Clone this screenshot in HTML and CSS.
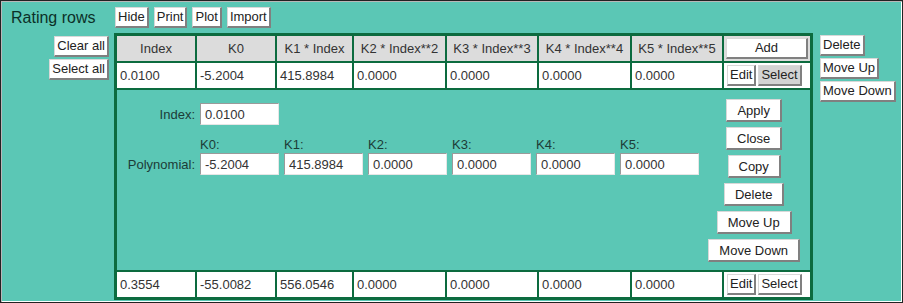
FILE: index.html
```html
<!DOCTYPE html>
<html lang="en">
<head>
    <meta charset="UTF-8">
    <title>Rating rows</title>
    <link rel="stylesheet" href="styles.css">
</head>
<body>
    <div class="frame">
        <div class="titlebar">
            <span class="title">Rating rows</span>
            <div class="tools">
                <button>Hide</button>
                <button>Print</button>
                <button>Plot</button>
                <button>Import</button>
            </div>
        </div>
        <div class="main">
            <div class="side-left">
                <button>Clear all</button>
                <button>Select all</button>
            </div>
            <table class="rows">
                <colgroup>
                    <col style="width: 78px">
                    <col style="width: 78px">
                    <col style="width: 75px">
                    <col style="width: 91px">
                    <col style="width: 90px">
                    <col style="width: 91px">
                    <col style="width: 90px">
                    <col style="width: 86px">
                </colgroup>
                <thead>
                    <tr>
                        <th>Index</th>
                        <th>K0</th>
                        <th>K1 * Index</th>
                        <th>K2 * Index**2</th>
                        <th>K3 * Index**3</th>
                        <th>K4 * Index**4</th>
                        <th>K5 * Index**5</th>
                        <th class="act-head"><button class="add">Add</button></th>
                    </tr>
                </thead>
                <tbody>
                    <tr>
                        <td>0.0100</td>
                        <td>-5.2004</td>
                        <td>415.8984</td>
                        <td>0.0000</td>
                        <td>0.0000</td>
                        <td>0.0000</td>
                        <td>0.0000</td>
                        <td class="act"><div class="act-btns"><button>Edit</button><button class="on">Select</button></div></td>
                    </tr>
                    <tr>
                        <td colspan="8" class="editor-cell">
                            <div class="editor">
                                <div class="fields">
                                    <label class="lbl">Index:</label>
                                    <input type="text" value="0.0100">
                                    <span></span><span></span><span></span><span></span><span></span>

                                    <span></span>
                                    <label class="klbl">K0:</label>
                                    <label class="klbl">K1:</label>
                                    <label class="klbl">K2:</label>
                                    <label class="klbl">K3:</label>
                                    <label class="klbl">K4:</label>
                                    <label class="klbl">K5:</label>

                                    <label class="lbl">Polynomial:</label>
                                    <input type="text" value="-5.2004">
                                    <input type="text" value="415.8984">
                                    <input type="text" value="0.0000">
                                    <input type="text" value="0.0000">
                                    <input type="text" value="0.0000">
                                    <input type="text" value="0.0000">
                                </div>
                                <div class="ed-btns">
                                    <button>Apply</button>
                                    <button>Close</button>
                                    <button>Copy</button>
                                    <button>Delete</button>
                                    <button>Move Up</button>
                                    <button>Move Down</button>
                                </div>
                            </div>
                        </td>
                    </tr>
                    <tr>
                        <td>0.3554</td>
                        <td>-55.0082</td>
                        <td>556.0546</td>
                        <td>0.0000</td>
                        <td>0.0000</td>
                        <td>0.0000</td>
                        <td>0.0000</td>
                        <td class="act"><div class="act-btns"><button>Edit</button><button>Select</button></div></td>
                    </tr>
                </tbody>
            </table>
            <div class="side-right">
                <button>Delete</button>
                <button>Move Up</button>
                <button>Move Down</button>
            </div>
        </div>
    </div>
</body>
</html>
```

FILE: styles.css
```css
body {
    margin: 0;
    font-family: "Liberation Sans", Arial, sans-serif;
    font-size: 13px;
    color: #333;
}
.frame {
    width: 903px;
    height: 303px;
    box-sizing: border-box;
    border: 1px solid #222;
    box-shadow: inset 1px 1px #b8b8b8, inset -1px -1px #fff;
    background-color: #5bc7b5;
    overflow: hidden;
}
button {
    font-family: "Liberation Sans", Arial, sans-serif;
    font-size: 13px;
    line-height: 15px;
    color: #222;
    background-color: #fff;
    border-style: solid;
    border-width: 1px 2px 2px 1px;
    border-color: #d8d8d8 #808080 #808080 #d8d8d8;
    border-radius: 0;
    padding: 1px 2px 2px;
    margin: 0;
}
button.on {
    background-color: #d3d3d3;
}
.titlebar {
    display: flex;
    align-items: center;
    padding-top: 6px;
}
.title {
    width: 114px;
    box-sizing: border-box;
    padding-left: 10px;
    font-size: 16px;
    color: #0c3028;
}
.tools {
    display: flex;
    gap: 5px;
}
.main {
    display: flex;
    align-items: flex-start;
    margin-top: 5px;
}
.side-left {
    width: 108px;
    margin-right: 5px;
    padding-top: 3px;
    display: flex;
    flex-direction: column;
    align-items: flex-end;
    gap: 2px;
}
.side-right {
    margin-left: 7px;
    padding-top: 2px;
    display: flex;
    flex-direction: column;
    align-items: flex-start;
    gap: 2px;
}
.rows {
    width: 699px;
    table-layout: fixed;
    border-collapse: separate;
    border-spacing: 2px;
    border: 1px solid #0c6b3f;
    background-color: #0c6b3f;
}
.rows th, .rows td {
    box-sizing: border-box;
    height: 25px;
    padding: 0 3px;
    white-space: nowrap;
    overflow: hidden;
}
.rows th {
    background-color: #dcdcdc;
    font-weight: normal;
    text-align: center;
    color: #333;
}
.rows td {
    background-color: #fff;
    text-align: left;
}
.rows th.act-head {
    padding: 0 2px;
}
.add {
    width: 100%;
    display: block;
}
.act-btns {
    display: flex;
    gap: 2px;
}
.rows td.editor-cell {
    height: 180px;
    padding: 0;
    background-color: #5bc7b5;
    vertical-align: top;
}
.editor {
    display: flex;
    justify-content: space-between;
    align-items: flex-start;
    padding: 9px 10px 8px 0;
}
.fields {
    display: grid;
    grid-template-columns: 78px repeat(6, 79px);
    grid-template-rows: 22px 28px 22px;
    column-gap: 5px;
    margin-top: 4px;
}
.fields .lbl {
    align-self: center;
    text-align: right;
    color: #1b3c37;
}
.fields .klbl {
    align-self: end;
    padding-bottom: 1px;
    color: #1b3c37;
}
.fields input {
    width: 79px;
    height: 22px;
    box-sizing: border-box;
    margin: 0;
    padding: 0 4px;
    border: 1px solid;
    border-color: #9a9a9a #e6e6e6 #e6e6e6 #9a9a9a;
    background-color: #fff;
    font-family: "Liberation Sans", Arial, sans-serif;
    font-size: 13px;
    color: #333;
}
.ed-btns {
    display: flex;
    flex-direction: column;
    align-items: center;
    gap: 5px;
}
.ed-btns button {
    padding: 3px 10px 2px;
}
```
